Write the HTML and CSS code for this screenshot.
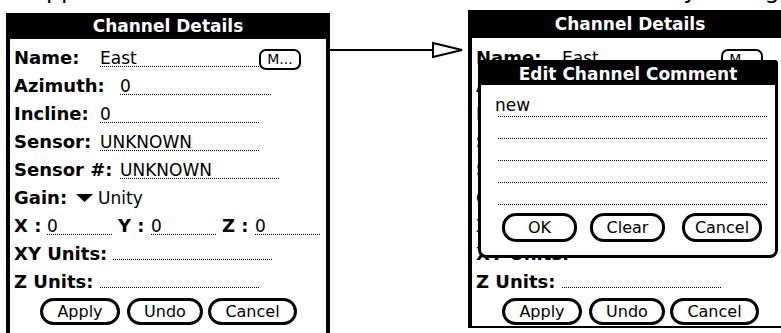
FILE: index.html
```html
<!DOCTYPE html>
<html lang="en">
<head>
  <meta charset="UTF-8">
  <title>Channel Details</title>
  <link rel="stylesheet" href="styles.css">
</head>
<body>

  <div class="stage">

    <!-- Ecran principal -->
    <div class="panel panel-left">
      <div class="caption">Application Screen</div>
      <div class="screen">
        <div class="titlebar">Channel Details</div>
        <div class="form">
          <div class="row">
            <span class="label">Name:</span>
            <span class="field name-field">East</span>
            <span class="mbtn">M...</span>
          </div>
          <div class="row">
            <span class="label wide">Azimuth:</span>
            <span class="field az-field">0</span>
          </div>
          <div class="row">
            <span class="label">Incline:</span>
            <span class="field">0</span>
          </div>
          <div class="row">
            <span class="label">Sensor:</span>
            <span class="field">UNKNOWN</span>
          </div>
          <div class="row">
            <span class="label wide">Sensor #:</span>
            <span class="field">UNKNOWN</span>
          </div>
          <div class="row">
            <span class="label-plain">Gain:</span>
            <svg class="popup" width="17" height="8" viewBox="0 0 17 8"><polygon points="0,0 17,0 8.5,8" fill="#000"/></svg>
            <span class="popup-value">Unity</span>
          </div>
          <div class="row">
            <span class="coord-label">X :</span>
            <span class="field short">0</span>
            <span class="coord-label">Y :</span>
            <span class="field short">0</span>
            <span class="coord-label">Z :</span>
            <span class="field short">0</span>
          </div>
          <div class="row">
            <span class="label mid">XY Units:</span>
            <span class="field"></span>
          </div>
          <div class="row">
            <span class="label">Z Units:</span>
            <span class="field"></span>
          </div>
        </div>
        <div class="buttons">
          <span class="btn btn-apply">Apply</span>
          <span class="btn btn-undo">Undo</span>
          <span class="btn btn-cancel">Cancel</span>
        </div>
      </div>
    </div>

    <svg class="arrow" width="138" height="62" viewBox="0 0 138 62">
      <line x1="0" y1="50" x2="103" y2="50" stroke="#000" stroke-width="2"/>
      <polygon points="103,43 132,50 103,57" fill="#fff" stroke="#000" stroke-width="2"/>
    </svg>

    <!-- Ecran avec le dialogue (les valeurs cachees par le dialogue sont omises) -->
    <div class="panel panel-right">
      <div class="caption">Comment Entry Dialog</div>
      <div class="screen">
        <div class="titlebar">Channel Details</div>
        <div class="form">
          <div class="row">
            <span class="label">Name:</span>
            <span class="field name-field">East</span>
            <span class="mbtn">M...</span>
          </div>
          <div class="row"><span class="label wide">Azimuth:</span></div>
          <div class="row"><span class="label">Incline:</span></div>
          <div class="row"><span class="label">Sensor:</span></div>
          <div class="row"><span class="label wide">Sensor #:</span></div>
          <div class="row"><span class="label-plain">Gain:</span></div>
          <div class="row"><span class="coord-label">X :</span></div>
          <div class="row"><span class="label mid">XY Units:</span></div>
          <div class="row">
            <span class="label">Z Units:</span>
            <span class="field"></span>
          </div>
        </div>
        <div class="buttons">
          <span class="btn btn-apply">Apply</span>
          <span class="btn btn-undo">Undo</span>
          <span class="btn btn-cancel">Cancel</span>
        </div>

        <div class="dialog">
          <div class="dialog-title">Edit Channel Comment</div>
          <div class="dialog-body">
            <div class="note-line"><span class="note-text">new</span></div>
            <div class="note-line"></div>
            <div class="note-line"></div>
            <div class="note-line"></div>
            <div class="note-line"></div>
          </div>
          <div class="dialog-buttons">
            <span class="btn btn-ok">OK</span>
            <span class="btn btn-clear">Clear</span>
            <span class="btn btn-dcancel">Cancel</span>
          </div>
        </div>
      </div>
    </div>

  </div>

</body>
</html>
```

FILE: styles.css
```css
* {
  box-sizing: border-box;
}

body {
  margin: 0;
  width: 781px;
  height: 333px;
  overflow: hidden;
  background: #ffffff;
  color: #000000;
  font-family: "DejaVu Sans", "Liberation Sans", sans-serif;
}

.stage {
  display: flex;
  align-items: flex-start;
}

.panel {
  flex: none;
  width: 324px;
}

.panel-left {
  margin-left: 6px;
}

.arrow {
  flex: none;
}

/* Legende coupee en haut de la page */
.caption {
  height: 28px;
  margin-top: -24px;
  font-size: 23.5px;
  line-height: 28px;
  white-space: nowrap;
}

.panel-left .caption {
  padding-left: 24px;
}

.panel-right .caption {
  padding-left: 44px;
}

.screen {
  position: relative;
  border-left: 4px solid #000;
  border-right: 4px solid #000;
}

.panel-left .screen {
  margin-top: 9px;
  height: 330px;
}

.panel-right .screen {
  margin-top: 6px;
  height: 318px;
  border-bottom: 2px solid #000;
}

.titlebar {
  background: #000;
  color: #fff;
  font-weight: bold;
  font-size: 17px;
  text-align: center;
  height: 26px;
  line-height: 26px;
}

.panel-right .titlebar {
  height: 28px;
  line-height: 28px;
}

.form {
  padding: 5px 0 0 4px;
}

.panel-right .form {
  padding-top: 6px;
}

.row {
  display: flex;
  align-items: baseline;
  height: 28px;
  line-height: 28px;
  font-size: 17px;
  white-space: nowrap;
}

.label,
.label-plain,
.coord-label {
  font-weight: bold;
  font-size: 18px;
}

.label {
  min-width: 86px;
}

.label.wide {
  min-width: 106px;
}

.label.mid {
  min-width: 99px;
}

/* Champ souligne en pointilles */
.field {
  width: 160px;
  height: 17px;
  line-height: 17px;
  background-image: linear-gradient(90deg, #000 50%, transparent 50%);
  background-size: 2px 1px;
  background-repeat: repeat-x;
  background-position: left bottom;
}

.field.name-field {
  width: 159px;
}

.field.az-field {
  width: 152px;
}

.field.short {
  width: 66px;
  margin-right: 5px;
}

.coord-label {
  width: 33px;
}

.mbtn {
  align-self: flex-start;
  margin-top: 5px;
  width: 42px;
  height: 21px;
  border: 2px solid #000;
  border-radius: 7px;
  font-size: 14px;
  line-height: 17px;
  text-align: center;
}

.popup {
  margin-left: 9px;
  align-self: center;
}

.popup-value {
  margin-left: 5px;
}

.buttons {
  display: flex;
  margin-top: 2px;
  padding-left: 30px;
}

.btn {
  height: 27px;
  border: 3px solid #000;
  border-radius: 14px;
  font-size: 16px;
  line-height: 21px;
  text-align: center;
  background: #fff;
}

.btn-apply {
  width: 80px;
}

.btn-undo {
  width: 76px;
  margin-left: 7px;
}

.btn-cancel {
  width: 89px;
  margin-left: 5px;
}

/* Dialogue modal par-dessus le formulaire */
.dialog {
  position: absolute;
  left: 6px;
  top: 50px;
  width: 300px;
  height: 198px;
  background: #fff;
  border: 3px solid #000;
  border-radius: 3px 3px 8px 8px;
}

.dialog-title {
  background: #000;
  color: #fff;
  font-weight: bold;
  font-size: 17px;
  height: 22px;
  line-height: 22px;
  text-align: center;
}

.dialog-body {
  padding: 10px 8px 0 17px;
}

.note-line {
  height: 22px;
  line-height: 21px;
  font-size: 17px;
  background-image: linear-gradient(90deg, #000 50%, transparent 50%);
  background-size: 2px 1px;
  background-repeat: repeat-x;
  background-position: left bottom;
}

.note-text {
  margin-left: -3px;
}

.dialog-buttons {
  display: flex;
  margin-top: 8px;
  padding-left: 21px;
}

.dialog-buttons .btn {
  height: 29px;
  line-height: 23px;
}

.btn-ok {
  width: 75px;
}

.btn-clear {
  width: 75px;
  margin-left: 13px;
}

.btn-dcancel {
  width: 80px;
  margin-left: 17px;
}
```
